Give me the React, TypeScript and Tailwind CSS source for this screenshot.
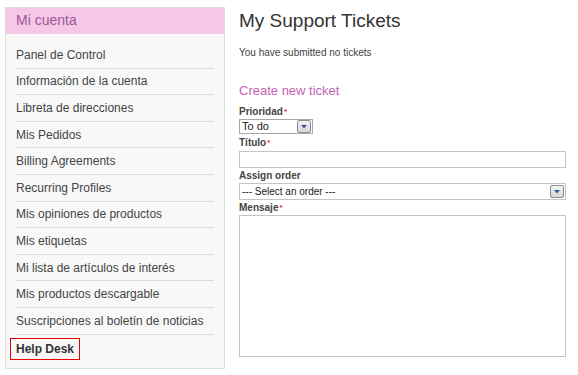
import React from 'react';

const menuItems = [
    'Panel de Control',
    'Información de la cuenta',
    'Libreta de direcciones',
    'Mis Pedidos',
    'Billing Agreements',
    'Recurring Profiles',
    'Mis opiniones de productos',
    'Mis etiquetas',
    'Mi lista de artículos de interés',
    'Mis productos descargable',
    'Suscripciones al boletín de noticias',
];

function SelectArrow() {
    return (
        <span className="flex h-[13px] w-[14px] items-center justify-center rounded-[2px] border border-[#8c8c8c] bg-gradient-to-b from-[#f4f4f4] to-[#d6d6d6]">
            <svg width="6" height="4" viewBox="0 0 6 4">
                <path d="M0 0h6L3 3.5z" fill="#3a5a9a" />
            </svg>
        </span>
    );
}

function Label({ text, required }: { text: string; required?: boolean }) {
    return (
        <div className="h-[15px] text-[10px] font-bold leading-[15px] text-[#444]">
            {text}
            {required && <span className="ml-[1px] align-top text-[8px] text-[#e23]">*</span>}
        </div>
    );
}

export default function App(): JSX.Element {
    return (
        <div className="flex min-h-[375px] items-start bg-white pl-[5px] pt-[7px] font-['Liberation_Sans',Arial,sans-serif]">
            <div className="w-[220px] border border-[#dcdcdc] bg-[#f8f8f8] pb-[8px]">
                <div className="h-[26px] bg-[#f5c8e7] px-[10px] text-[14px] leading-[25px] text-[#a0559a]">Mi cuenta</div>
                <ul className="px-[10px] pt-[8px]">
                    {menuItems.map((item) => (
                        <li
                            key={item}
                            className="flex h-[26.6px] items-center border-b border-[#dcdcdc] text-[12px] text-[#444]">
                            {item}
                        </li>
                    ))}
                </ul>
                <div className="mt-[1px] pl-[4px]">
                    <span className="inline-flex h-[22px] items-center border border-[#e00] px-[5px] text-[12px] font-bold text-[#333]">
                        Help Desk
                    </span>
                </div>
            </div>

            <div className="ml-[14px] w-[327px]">
                <h1 className="mt-[2px] text-[19px] leading-[24px] text-[#333]">My Support Tickets</h1>
                <p className="mt-[14px] text-[10px] leading-[12px] text-[#444]">You have submitted no tickets</p>
                <h2 className="mt-[24px] text-[13px] leading-[16px] text-[#c462b6]">Create new ticket</h2>
                <div className="mt-[5px]">
                    <Label text="Prioridad" required />
                    <div className="flex h-[15px] w-[74px] items-center justify-between border border-[#a8a8a8] bg-white pl-[2px] pr-[1px] text-[11px] text-[#222]">
                        To do
                        <SelectArrow />
                    </div>
                    <div className="mt-[1px]">
                        <Label text="Título" required />
                    </div>
                    <div className="mt-[1px] h-[17px] w-full border border-[#c4c4c4] bg-white" />
                    <Label text="Assign order" />
                    <div className="flex h-[17px] w-full items-center justify-between border border-[#c4c4c4] bg-white pl-[2px] pr-[1px] text-[10px] text-[#222]">
                        --- Select an order ---
                        <SelectArrow />
                    </div>
                    <Label text="Mensaje" required />
                    <div className="h-[142px] w-full border border-[#c4c4c4] bg-white" />
                </div>
            </div>
        </div>
    );
}
